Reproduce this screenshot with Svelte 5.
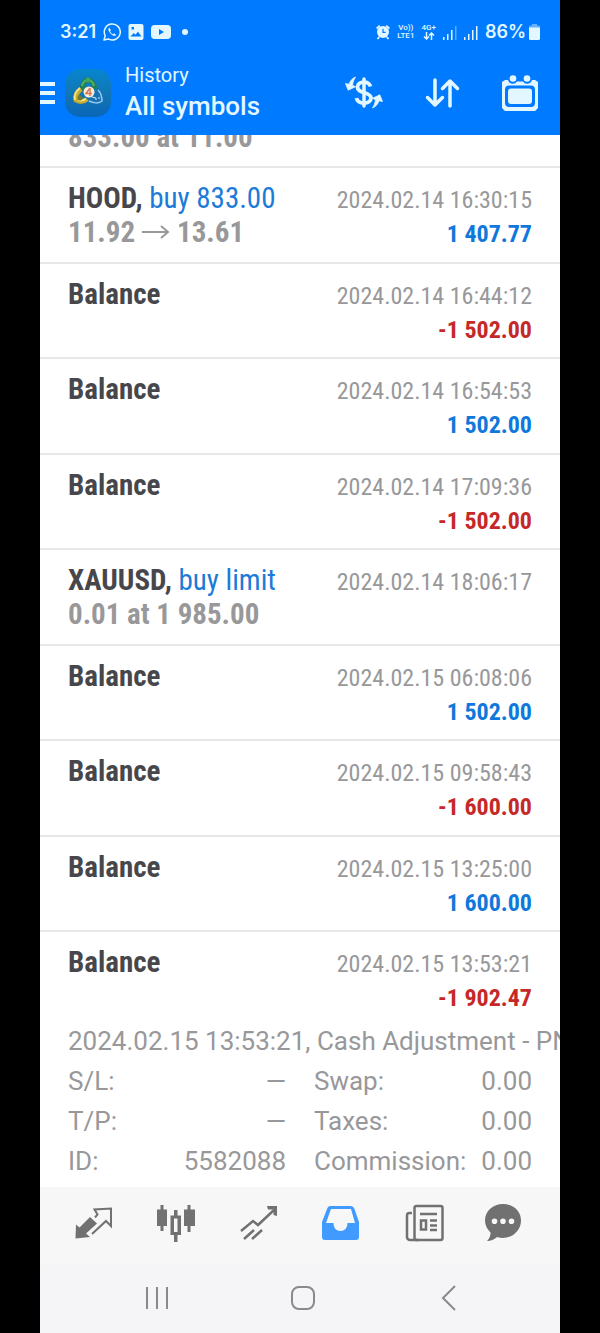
<script lang="ts">
	type Deal = {
		symbol?: string;
		action?: string;
		prices?: string;
		to?: string;
		time?: string;
		amount?: string;
	};

	const deals: Deal[] = [
		{ prices: '833.00 at 11.00' },
		{ symbol: 'HOOD,', action: 'buy 833.00', prices: '11.92', to: '13.61', time: '2024.02.14 16:30:15', amount: '1 407.77' },
		{ symbol: 'Balance', time: '2024.02.14 16:44:12', amount: '-1 502.00' },
		{ symbol: 'Balance', time: '2024.02.14 16:54:53', amount: '1 502.00' },
		{ symbol: 'Balance', time: '2024.02.14 17:09:36', amount: '-1 502.00' },
		{ symbol: 'XAUUSD,', action: 'buy limit', prices: '0.01 at 1 985.00', time: '2024.02.14 18:06:17' },
		{ symbol: 'Balance', time: '2024.02.15 06:08:06', amount: '1 502.00' },
		{ symbol: 'Balance', time: '2024.02.15 09:58:43', amount: '-1 600.00' },
		{ symbol: 'Balance', time: '2024.02.15 13:25:00', amount: '1 600.00' },
		{ symbol: 'Balance', time: '2024.02.15 13:53:21', amount: '-1 902.47' },
	];

	const details = [
		['S/L:', '—'],
		['Swap:', '0.00'],
		['T/P:', '—'],
		['Taxes:', '0.00'],
		['ID:', '5582088'],
		['Commission:', '0.00'],
	];
</script>

<div class="phone">
	<header class="top">
		<div class="status">
			<span class="clock">3:21</span>
			<svg width="18" height="18" viewBox="0 0 18 18" fill="none" stroke="currentColor">
				<path d="M1 17l1.200-4.300A8 8 0 1 1 5.300 15.900z" stroke-width="1.500" stroke-linejoin="round" />
				<path d="M6.300 4.800c-1.600 1-.9 3.500 1.200 5.600s4.500 3.200 5.600 1.500l-2-1.600-1.100.9c-1.300-.5-2.400-1.600-2.900-2.900l.9-1z" fill="currentColor" stroke="none" />
			</svg>
			<svg width="16" height="16" viewBox="0 0 16 16" fill="currentColor" fill-rule="evenodd">
				<path d="M2.500 0h11A2 2 0 0 1 15.500 2v12a2 2 0 0 1-2 2h-11a2 2 0 0 1-2-2V2a2 2 0 0 1 2-2zM2.500 12.500h11L10 7.800l-2.600 3-1.700-1.800zM3.500 3v2.500H6V3z" />
			</svg>
			<svg width="20" height="16" viewBox="0 0 20 16" fill="currentColor" fill-rule="evenodd">
				<path d="M4 1h12c3 0 4 1.500 4 4v6c0 2.500-1 4-4 4H4c-3 0-4-1.500-4-4V5c0-2.500 1-4 4-4zm4 4v6l5-3z" />
			</svg>
			<span class="dot"></span>
			<span class="spacer"></span>
			<svg width="14" height="16" viewBox="0 0 14 16" fill="none" stroke="currentColor">
				<circle cx="7" cy="8" r="6" fill="currentColor" stroke="none" />
				<path d="M.6 4.500L3.800 1.600M13.400 4.500l-3.200-2.900M3.200 13l-1.700 2M10.800 13l1.700 2" stroke-width="1.800" />
				<path d="M7 4.800V8.300h2.600" stroke="#007aff" stroke-width="1.200" />
			</svg>
			<span class="tiny"><span>Vo))</span><span>LTE1</span></span>
			<span class="tiny">
				<span>4G+</span>
				<svg width="12" height="8" viewBox="0 0 12 8" fill="none" stroke="currentColor" stroke-width="1.500">
					<path d="M3.500 0v7M1 4.500L3.500 7 6 4.500M8.500 8V1M6 3.500L8.500 1 11 3.500" />
				</svg>
			</span>
			<svg width="14" height="15" viewBox="0 0 14 15" fill="currentColor">
				<path d="M0 12h1.500v3H0zM4 9h1.500v6H4zM8 5h1.500v10H8z" />
				<path d="M12 1h1.500v14H12z" opacity=".4" />
			</svg>
			<svg width="14" height="15" viewBox="0 0 14 15" fill="currentColor">
				<path d="M0 12h1.500v3H0zM4 9h1.500v6H4zM8 5h1.500v10H8zM12 1h1.500v14H12z" />
			</svg>
			<span class="battery">86%</span>
			<svg width="11" height="16" viewBox="0 0 11 16" fill="currentColor">
				<path d="M3 0h5v1.500h1.500A1.500 1.500 0 0 1 11 3v1H0V3a1.500 1.500 0 0 1 1.500-1.500H3z" opacity=".45" />
				<path d="M0 3.500h11v11A1.500 1.500 0 0 1 9.500 16h-8A1.500 1.500 0 0 1 0 14.500z" />
			</svg>
		</div>

		<div class="appbar">
			<button class="menu" aria-label="Open menu">
				<svg width="15" height="24" viewBox="0 0 15 24" fill="currentColor">
					<path d="M0 1h15v4H0zM0 10h15v4H0zM0 19h15v4H0z" />
				</svg>
			</button>
			<svg class="logo" width="46" height="48" viewBox="0 0 46 48" fill="none">
				<defs>
					<linearGradient id="tile" x1="0" y1="0" x2="0" y2="1">
						<stop offset="0" stop-color="#0786cf" />
						<stop offset=".55" stop-color="#1275b4" />
						<stop offset="1" stop-color="#0866b8" />
					</linearGradient>
				</defs>
				<rect width="46" height="48" rx="15" fill="url(#tile)" />
				<path d="M17 22c0-5 2-11 6-11s6 4 7 9" stroke="#217f58" stroke-width="5" />
				<path d="M17 17c1-4 3-6 6-6s5 2 6 6" stroke="#55b06a" stroke-width="2" />
				<circle cx="23" cy="11" r="2.500" fill="#3da660" />
				<path d="M16 20c-4 3-6 7-5 11 3 2 8 2 11-1" stroke="#c5ab2c" stroke-width="5" />
				<path d="M15 19c-4 3-6 7-5 12M13 31c3 1 6 0 8-1" stroke="#f0e184" stroke-width="2" />
				<circle cx="15" cy="29" r="2.500" fill="#75792d" />
				<path d="M31 21c3 2 5 6 5 10-3 3-8 2-12 0" stroke="#1c72b4" stroke-width="5" />
				<path d="M33 21c3 3 4 7 4 11-3 3-9 2-13 0" stroke="#8fcdee" stroke-width="1.500" />
				<path d="M27 28l4 1v2M33 29h2" stroke="#d9edf7" />
				<circle cx="24" cy="23" r="5.500" fill="#f7eee0" />
				<path d="M25 19l-4 5.500h6M25 19v8" stroke="#df7652" stroke-width="1.500" />
			</svg>
			<div class="heading">
				<span class="sub">History</span>
				<h1>All symbols</h1>
			</div>
			<div class="actions">
				<button aria-label="Filter by symbol">
					<svg width="38" height="34" viewBox="0 0 38 34" fill="none" stroke="currentColor">
						<path d="M19 3v27" stroke-width="3.500" stroke-linecap="round" />
						<path d="M25.500 10.500c-1-3-3-4.300-6.500-4.300-4 0-6.500 2-6.500 5 0 3.300 3 4.200 6.500 5.300s7 2.300 7 5.500c0 3.200-3 5-7 5-4.500 0-7-1.800-7.500-5" stroke-width="3.800" />
						<path id="turn" d="M10.500 1C8 2 5 4.500 4 8.300L.5 7.500l2.700 6.700 7.300-3.500-3-1.400C7.800 6 9 3.500 10.500 1z" fill="currentColor" stroke="currentColor" stroke-width=".8" />
						<use href="#turn" transform="rotate(180 19 16.500)" />
					</svg>
				</button>
				<button aria-label="Sort">
					<svg width="38" height="34" viewBox="0 0 38 34" fill="none" stroke="currentColor" stroke-width="3.500" stroke-linecap="round" stroke-linejoin="round">
						<path d="M12 4v25M4.500 21.500L12 29l7.500-7.500M27 30V5M19.500 12.500L27 5l7.500 7.500" />
					</svg>
				</button>
				<button aria-label="Period">
					<svg width="38" height="36" viewBox="0 0 38 36" fill="currentColor">
						<path fill-rule="evenodd" d="M4 5h3a5 5 0 0 0 9 1.500h6A5 5 0 0 0 31 5h3l3 2v26l-3 3H4l-3-3V7zM8 10.500c-2.500 0-4 1.500-4 4V28c0 2.500 1.500 4 4 4h22c2.500 0 4-1.500 4-4V14.500c0-2.500-1.500-4-4-4z" />
						<rect x="7" y="13.500" width="24" height="15.500" rx="3" />
						<circle cx="12" cy="3.500" r="3.300" />
						<circle cx="26" cy="3.500" r="3.300" />
					</svg>
				</button>
			</div>
		</div>
	</header>

	<main class="history">
		{#each deals as deal, i (i)}
			<article class="deal" class:open={i === deals.length - 1}>
				<div class="main">
					<div class="left">
						<div class="title">
							{#if deal.symbol}<b>{deal.symbol}</b>{/if}
							{#if deal.action}<span class="action">{deal.action}</span>{/if}
						</div>
						{#if deal.prices}
							<div class="prices">
								{deal.prices}
								{#if deal.to}
									<svg width="30" height="16" viewBox="0 0 30 16" role="img" aria-label="to">
										<path d="M1 8h26M20 2l7 6-7 6" fill="none" stroke="currentColor" stroke-width="2" />
									</svg>
									{deal.to}
								{/if}
							</div>
						{/if}
					</div>
					<div class="right">
						{#if deal.time}<time>{deal.time}</time>{/if}
						{#if deal.amount}
							<div class="amount" class:loss={deal.amount.startsWith('-')}>{deal.amount}</div>
						{/if}
					</div>
				</div>
				{#if i === deals.length - 1}
					<div class="comment">2024.02.15 13:53:21, Cash Adjustment - PN</div>
					<dl>
						{#each details as [label, value] (label)}
							<div><dt>{label}</dt><dd>{value}</dd></div>
						{/each}
					</dl>
				{/if}
			</article>
		{/each}
	</main>

	<nav class="tabs">
		<button aria-label="Quotes">
			<svg width="40" height="40" viewBox="0 0 40 40">
				<path d="M2.500 36.500L3 22.500l3.500 3L17 15l7 6.500-11 10 4 3.500z" fill="currentColor" />
				<path d="M22 15.500l2.500-3L21.500 7.500 38 6.500V24l-5-5-14 13" fill="none" stroke="currentColor" stroke-width="2" />
			</svg>
		</button>
		<button aria-label="Charts">
			<svg width="40" height="40" viewBox="0 0 40 40" fill="currentColor">
				<path d="M1 7.500h3.500V3h3v4.500H11V24H7.500v5h-3v-5H1zM28 7.500h3.500V3h3v4.500H39V24h-4.500v6h-3v-6H28z" />
				<path fill-rule="evenodd" d="M14.500 13.500H18V8h3.500v5.500H25V33h-3.500v7H18v-7h-3.500zm3.500 3V30h3.500V16.500z" />
			</svg>
		</button>
		<button aria-label="Trade">
			<svg width="40" height="40" viewBox="0 0 40 40" fill="none" stroke="currentColor" stroke-width="2.500">
				<path d="M2 29l12-10 5 4L35 8M5 37l10-9M13 37l10-9" />
				<path d="M28 4h10v10l-3.500-1V7.500H29z" fill="currentColor" stroke="none" />
			</svg>
		</button>
		<button class="active" aria-label="History" aria-current="page">
			<svg width="40" height="40" viewBox="0 0 40 40" fill="currentColor" fill-rule="evenodd">
				<path d="M9.500 4h20c2 0 3 1 4 3L38 20v15a3 3 0 0 1-3 3H4a3 3 0 0 1-3-3V20L6 7c.8-2 1.700-3 3.500-3zM10 7L5 21h7.500c0 5 3 8 7 8s7-3 7-8H34L30 7z" />
			</svg>
		</button>
		<button aria-label="News">
			<svg width="40" height="40" viewBox="0 0 40 40" fill="none" stroke="currentColor" stroke-width="2.500">
				<rect x="10.500" y="4" width="28" height="34" rx="2" />
				<path d="M8 11H5.500A2.500 2.500 0 0 0 3 13.500V35a3 3 0 0 0 3 3h8M16 12h17M26 18.500h7M26 23.500h7M26 28h7" />
				<rect x="17" y="18.500" width="5" height="9" />
			</svg>
		</button>
		<button aria-label="Messages">
			<svg width="40" height="40" viewBox="0 0 40 40" fill="currentColor" fill-rule="evenodd">
				<path d="M16 2C26 2 34 9 34 18.500S26 36 16 36c-2 0-4-.3-6-1-3 2.500-6 4-10 4 2.500-2.500 3.800-5.500 3.500-8.500C0 27 -2 23 -2 18.500-2 9 6 2 16 2zM7.500 16.500a2.800 2.800 0 1 0 0 5.600 2.800 2.800 0 0 0 0-5.600zm8.500 0a2.800 2.800 0 1 0 0 5.600 2.800 2.800 0 0 0 0-5.600zm8.500 0a2.800 2.800 0 1 0 0 5.600 2.800 2.800 0 0 0 0-5.600z" />
			</svg>
		</button>
	</nav>

	<nav class="system">
		<button aria-label="Recent apps">
			<svg width="26" height="26" viewBox="0 0 26 26" fill="none" stroke="currentColor" stroke-width="2">
				<path d="M3 2v22M13 2v22M23 2v22" />
			</svg>
		</button>
		<button aria-label="Home">
			<svg width="26" height="26" viewBox="0 0 26 26" fill="none" stroke="currentColor" stroke-width="2">
				<rect x="2" y="2" width="22" height="22" rx="7" />
			</svg>
		</button>
		<button aria-label="Back">
			<svg width="26" height="26" viewBox="0 0 26 26" fill="none" stroke="currentColor" stroke-width="2">
				<path d="M19 1L7 13l12 12" />
			</svg>
		</button>
	</nav>
</div>

<style>
:global(body) { background: #000; }

.phone {
	display: flex; flex-direction: column;
	height: 100vh; margin: 0 40px;
	background: #fff; color: #98989a;
	font-family: Roboto, "Liberation Sans", sans-serif;
}

button {
	display: flex; align-items: center; justify-content: center;
	padding: 0; border: none; background: none; color: inherit; cursor: pointer;
}
svg { display: block; flex-shrink: 0; }
.tabs svg { overflow: visible; }

.top { flex-shrink: 0; background: #007aff; color: #e2f7ff; }

.status {
	display: flex; align-items: center; gap: 7px;
	height: 18px; padding: 23px 20px 21px;
}
.clock, .battery { font-family: Inter, sans-serif; font-size: 18px; font-weight: 600; line-height: 18px; }
.dot { width: 6px; height: 6px; margin-left: 4px; border-radius: 50%; background: currentColor; }
.spacer { flex: 1; }
.tiny {
	display: flex; flex-direction: column; align-items: center;
	font-size: 8px; font-weight: 500; line-height: 8px;
}
.battery { margin-right: -4px; }

.appbar { display: flex; align-items: center; height: 62px; padding-bottom: 11px; }
.logo { margin-left: 10px; }
.heading { margin-left: 14px; }
.sub { display: block; font-size: 20px; line-height: 26px; }
h1 { margin: 0; font-size: 26px; line-height: 36px; font-weight: 500; }
.actions { display: flex; gap: 40px; margin-left: auto; padding-right: 21px; }

.history {
	flex: 1; min-height: 0;
	display: flex; flex-direction: column; justify-content: flex-end;
	overflow: hidden;
	font-family: "Roboto Condensed", "Liberation Sans Narrow", Roboto, sans-serif;
}

.deal {
	flex-shrink: 0; box-sizing: border-box;
	height: 95px; padding: 13px 28px 0;
	border-top: 2px solid #e8e8ea;
}
.deal:nth-child(even) { height: 96px; }
.deal.open { height: auto; padding-bottom: 6px; }

.main { display: flex; justify-content: space-between; height: 68px; white-space: nowrap; }
.left { font-size: 29px; line-height: 34px; }
.title { height: 34px; }
.left b { color: #47474b; }
.action { color: #1c7bd8; }
.prices { display: flex; align-items: center; gap: 6px; font-weight: 700; }
.right { padding-top: 2px; font-size: 24px; line-height: 34px; text-align: right; }
.amount { color: #0f78dc; font-weight: 700; }
.amount.loss { color: #c62828; }

.comment, dl { font-family: Roboto, sans-serif; font-size: 26px; line-height: 40px; }
.comment { margin: 8px -28px 0 0; white-space: nowrap; overflow: hidden; }
dl { display: grid; grid-template-columns: 1fr 1fr; column-gap: 28px; margin: 0; }
dl div { display: flex; justify-content: space-between; }
dd { margin: 0; }

.tabs {
	flex-shrink: 0;
	display: grid; grid-template-columns: repeat(6, 1fr);
	height: 78px; padding: 0 12px; box-sizing: border-box;
	background: #f7f7f8; color: #717171;
}
.tabs button { padding-bottom: 8px; }
.tabs .active { color: #419bff; }

.system {
	flex-shrink: 0;
	display: grid; grid-template-columns: repeat(3, 1fr);
	height: 68px; padding: 0 38px 2px 44px; box-sizing: border-box;
	background: #f5f5f7; color: #8a8a8c;
}
</style>
